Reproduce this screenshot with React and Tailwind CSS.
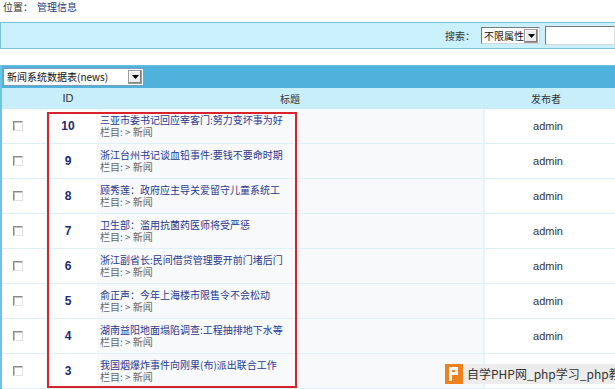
const ROWS = [
  { id: 10, title: '三亚市委书记回应宰客门:努力变坏事为好' },
  { id: 9, title: '浙江台州书记谈血铅事件:要钱不要命时期' },
  { id: 8, title: '顾秀莲：政府应主导关爱留守儿童系统工' },
  { id: 7, title: '卫生部：滥用抗菌药医师将受严惩' },
  { id: 6, title: '浙江副省长:民间借贷管理要开前门堵后门' },
  { id: 5, title: '俞正声：今年上海楼市限售令不会松动' },
  { id: 4, title: '湖南益阳地面塌陷调查:工程抽排地下水等' },
  { id: 3, title: '我国烟爆炸事件向刚果(布)派出联合工作', hidden: true },
]

const latin = { fontFamily: '"Liberation Sans", Arial, sans-serif' }

function Arrow() {
  return (
    <span className="flex h-[14px] w-[14px] shrink-0 items-center justify-center border border-[#9a9a9a] bg-[#ececec] shadow-[inset_-1px_-1px_0_#808080,inset_1px_1px_0_#fff]">
      <svg width="7" height="4" viewBox="0 0 7 4">
        <path d="M0 0h7L3.5 4z" fill="#000" />
      </svg>
    </span>
  )
}

function Checkbox() {
  return (
    <span className="block h-[10px] w-[10px] border border-t-[#8a8a8a] border-l-[#8a8a8a] border-r-[#e2e2e2] border-b-[#e2e2e2] bg-white shadow-[inset_1px_1px_0_#c4c4c4]" />
  )
}

export default function App() {
  return (
    <div
      className="relative h-[389px] w-[615px] overflow-hidden bg-white text-[10px] text-[#333]"
      style={{ fontFamily: '"Noto Sans CJK SC", "Noto Sans", sans-serif' }}
    >
      {/* breadcrumb */}
      <div className="flex h-[22px] items-start whitespace-nowrap pl-[3px] pt-[1px] leading-[12px]">
        <span className="text-[#333]">位置：</span>
        <span className="ml-[4px] text-[#27357a]">管理信息</span>
      </div>

      {/* search bar */}
      <div className="flex h-[27px] items-center justify-end whitespace-nowrap border-y border-l border-[#7cc2d6] bg-[#c9f0fb]">
        <span className="mr-[6px] text-[#333]">搜索：</span>
        <div className="flex h-[17px] w-[59px] items-center justify-between border border-t-[#7a7a7a] border-l-[#7a7a7a] border-r-[#d6d6d6] border-b-[#d6d6d6] bg-white pl-[2px] pr-[1px]">
          <span className="leading-none text-[#111]">不限属性</span>
          <Arrow />
        </div>
        <div className="ml-[5px] h-[19px] w-[70px] border border-t-[#7a7a7a] border-l-[#7a7a7a] border-r-[#e0e0e0] border-b-[#d6d6d6] bg-white" />
      </div>

      <div className="h-[16px]" />

      {/* table */}
      <div className="border-l-2 border-[#6cc3e3]">
        <div className="flex h-[23px] items-center border-t border-[#6dbfe0] bg-[#4fb2dc] pl-[1px]">
          <div className="flex h-[18px] w-[141px] items-center justify-between whitespace-nowrap border border-[#7f9db9] bg-white pl-[3px] pr-[1px]">
            <span className="leading-none text-[#111]">新闻系统数据表(news)</span>
            <Arrow />
          </div>
        </div>

        <div className="grid h-[21px] grid-cols-[45px_50px_386px_1fr] items-center whitespace-nowrap bg-[#c8eef9] text-[#333]">
          <span />
          <span className="pr-[8px] text-center text-[11px]" style={latin}>ID</span>
          <span className="text-center">标题</span>
          <span className="pr-[6px] text-center">发布者</span>
        </div>

        <div className="relative">
          {ROWS.map((r) => (
            <div
              key={r.id}
              className="grid h-[35px] grid-cols-[45px_50px_386px_1fr] border-b border-[#dcf0f8]"
            >
              <div className="flex items-center border-r border-[#eef7fb] pl-[11px]">
                <Checkbox />
              </div>
              <div
                className="flex items-center justify-center pr-[8px] text-[12px] font-bold text-[#1d2c6b]"
                style={latin}
              >
                {r.id}
              </div>
              <div className="flex flex-col justify-center whitespace-nowrap bg-[#f7f9fa] pl-[3px] pb-[1px] leading-[12px]">
                <span className="text-[#283a8f]">{r.title}</span>
                <span className="text-[#666]">栏目: &gt; 新闻</span>
              </div>
              <div
                className="flex items-center justify-center border-l-2 border-[#e6f4fa] pr-[4px] text-[11px] text-[#333]"
                style={latin}
              >
                {r.hidden ? null : 'admin'}
              </div>
            </div>
          ))}
          {/* red highlight box */}
          <div className="pointer-events-none absolute left-[45px] top-[3px] h-[276px] w-[250px] border-2 border-[#d8222c]" />
        </div>
      </div>

      {/* watermark */}
      <div className="absolute left-[445px] top-[364px] flex h-[20px] w-[175px] items-center whitespace-nowrap bg-[#ececec]">
        <svg width="18" height="20" viewBox="0 0 18 20" className="shrink-0">
          <rect width="18" height="20" fill="#f07f1e" />
          <path d="M4 3h9v8H7v6H4z M7 6v2h3V6z" fill="#fff" fillRule="evenodd" />
        </svg>
        <span className="ml-[4px] text-[12px] leading-none text-[#333]">自学PHP网_php学习_php教程</span>
      </div>
    </div>
  )
}
